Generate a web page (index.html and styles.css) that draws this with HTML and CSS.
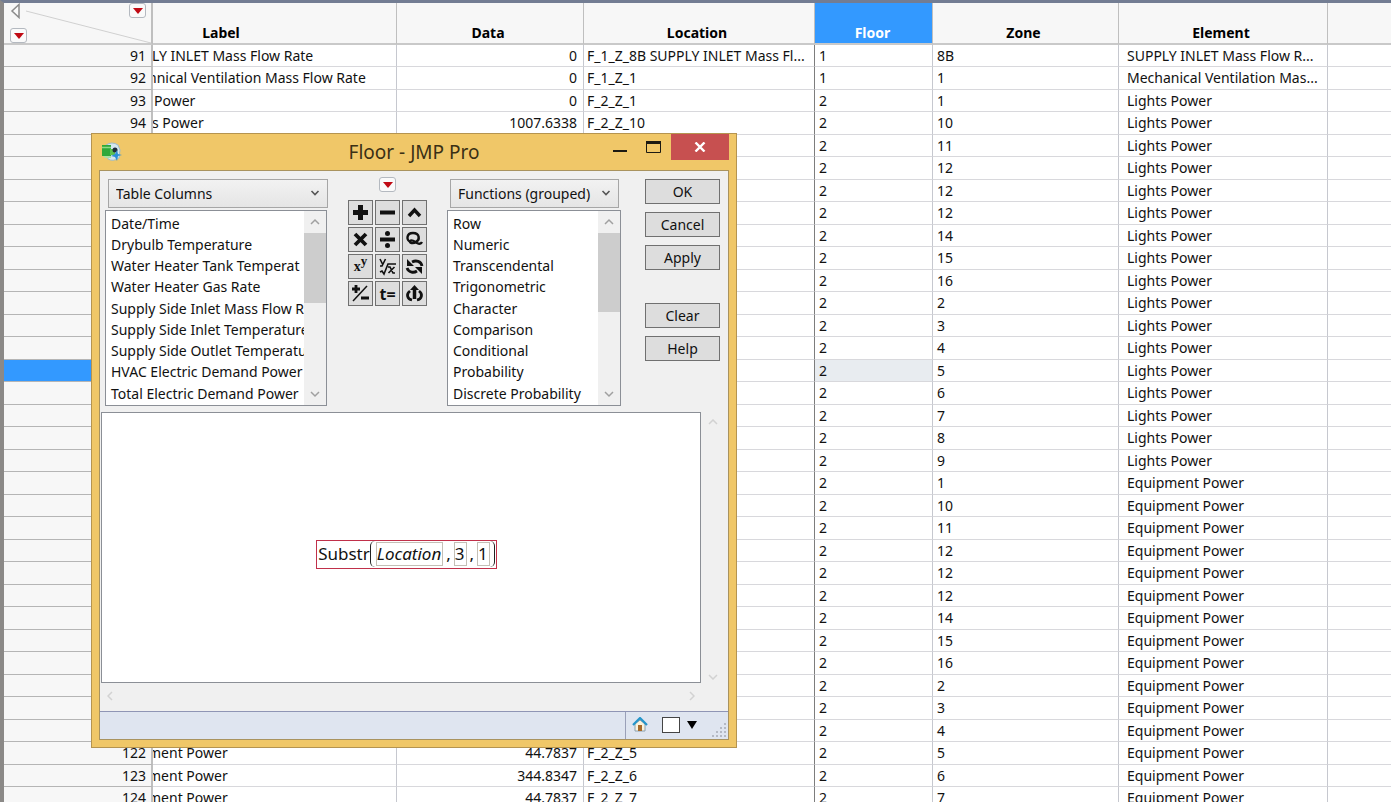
FILE: index.html
```html
<!DOCTYPE html>
<html lang="en">
<head>
<meta charset="utf-8">
<title>Floor - JMP Pro</title>
<link rel="stylesheet" href="styles.css">
</head>
<body>
<main class="sheet">
<table class="data">
<colgroup><col class="c-row"><col class="c-label"><col class="c-data"><col class="c-location"><col class="c-floor"><col class="c-zone"><col class="c-element"><col></colgroup>
<thead>
<tr>
<th class="corner">
<div class="corner-box">
<svg class="diagonal" viewBox="0 0 147 40" preserveAspectRatio="none" aria-hidden="true"><path d="M22 8L147 40" stroke="#d0d0d0" fill="none"/></svg>
<div class="corner-top">
<button class="plain" aria-label="Collapse panel"><svg width="12" height="16" viewBox="0 0 12 16"><path d="M9 1.500v13L2 8z" fill="#fafafa" stroke="#8c8c8c" stroke-width="1.500"/></svg></button>
<button class="red-menu" aria-label="Columns menu"><svg width="10" height="6" viewBox="0 0 10 6"><path d="M0 0h10L5 6z" fill="#c00a14"/></svg></button>
</div>
<button class="red-menu" aria-label="Rows menu"><svg width="10" height="6" viewBox="0 0 10 6"><path d="M0 0h10L5 6z" fill="#c00a14"/></svg></button>
</div>
</th>
<th class="h-label">Label</th><th>Data</th><th>Location</th><th class="picked">Floor</th><th>Zone</th><th>Element</th><th></th>
</tr>
</thead>
<tbody>
<tr><th>91</th><td class="cut">LY INLET Mass Flow Rate</td><td>0</td><td>F_1_Z_8B SUPPLY INLET Mass Fl...</td><td>1</td><td>8B</td><td>SUPPLY INLET Mass Flow R...</td><td></td></tr>
<tr><th>92</th><td class="cut deep">hnical Ventilation Mass Flow Rate</td><td>0</td><td>F_1_Z_1</td><td>1</td><td>1</td><td>Mechanical Ventilation Mas...</td><td></td></tr>
<tr><th>93</th><td>Power</td><td>0</td><td>F_2_Z_1</td><td>2</td><td>1</td><td>Lights Power</td><td></td></tr>
<tr><th>94</th><td class="cut">s Power</td><td>1007.6338</td><td>F_2_Z_10</td><td>2</td><td>10</td><td>Lights Power</td><td></td></tr>
<tr><th></th><td></td><td></td><td></td><td>2</td><td>11</td><td>Lights Power</td><td></td></tr>
<tr><th></th><td></td><td></td><td></td><td>2</td><td>12</td><td>Lights Power</td><td></td></tr>
<tr><th></th><td></td><td></td><td></td><td>2</td><td>12</td><td>Lights Power</td><td></td></tr>
<tr><th></th><td></td><td></td><td></td><td>2</td><td>12</td><td>Lights Power</td><td></td></tr>
<tr><th></th><td></td><td></td><td></td><td>2</td><td>14</td><td>Lights Power</td><td></td></tr>
<tr><th></th><td></td><td></td><td></td><td>2</td><td>15</td><td>Lights Power</td><td></td></tr>
<tr><th></th><td></td><td></td><td></td><td>2</td><td>16</td><td>Lights Power</td><td></td></tr>
<tr><th></th><td></td><td></td><td></td><td>2</td><td>2</td><td>Lights Power</td><td></td></tr>
<tr><th></th><td></td><td></td><td></td><td>2</td><td>3</td><td>Lights Power</td><td></td></tr>
<tr><th></th><td></td><td></td><td></td><td>2</td><td>4</td><td>Lights Power</td><td></td></tr>
<tr class="current"><th></th><td></td><td></td><td></td><td>2</td><td>5</td><td>Lights Power</td><td></td></tr>
<tr><th></th><td></td><td></td><td></td><td>2</td><td>6</td><td>Lights Power</td><td></td></tr>
<tr><th></th><td></td><td></td><td></td><td>2</td><td>7</td><td>Lights Power</td><td></td></tr>
<tr><th></th><td></td><td></td><td></td><td>2</td><td>8</td><td>Lights Power</td><td></td></tr>
<tr><th></th><td></td><td></td><td></td><td>2</td><td>9</td><td>Lights Power</td><td></td></tr>
<tr><th></th><td></td><td></td><td></td><td>2</td><td>1</td><td>Equipment Power</td><td></td></tr>
<tr><th></th><td></td><td></td><td></td><td>2</td><td>10</td><td>Equipment Power</td><td></td></tr>
<tr><th></th><td></td><td></td><td></td><td>2</td><td>11</td><td>Equipment Power</td><td></td></tr>
<tr><th></th><td></td><td></td><td></td><td>2</td><td>12</td><td>Equipment Power</td><td></td></tr>
<tr><th></th><td></td><td></td><td></td><td>2</td><td>12</td><td>Equipment Power</td><td></td></tr>
<tr><th></th><td></td><td></td><td></td><td>2</td><td>12</td><td>Equipment Power</td><td></td></tr>
<tr><th></th><td></td><td></td><td></td><td>2</td><td>14</td><td>Equipment Power</td><td></td></tr>
<tr><th></th><td></td><td></td><td></td><td>2</td><td>15</td><td>Equipment Power</td><td></td></tr>
<tr><th></th><td></td><td></td><td></td><td>2</td><td>16</td><td>Equipment Power</td><td></td></tr>
<tr><th></th><td></td><td></td><td></td><td>2</td><td>2</td><td>Equipment Power</td><td></td></tr>
<tr><th></th><td></td><td></td><td></td><td>2</td><td>3</td><td>Equipment Power</td><td></td></tr>
<tr><th></th><td></td><td></td><td></td><td>2</td><td>4</td><td>Equipment Power</td><td></td></tr>
<tr><th>122</th><td class="cut deep">ment Power</td><td>44.7837</td><td>F_2_Z_5</td><td>2</td><td>5</td><td>Equipment Power</td><td></td></tr>
<tr><th>123</th><td class="cut deep">ment Power</td><td>344.8347</td><td>F_2_Z_6</td><td>2</td><td>6</td><td>Equipment Power</td><td></td></tr>
<tr><th>124</th><td class="cut deep">ment Power</td><td>44.7837</td><td>F_2_Z_7</td><td>2</td><td>7</td><td>Equipment Power</td><td></td></tr>
</tbody>
</table>
</main>

<section class="window" role="dialog" aria-labelledby="window-title">
<header class="titlebar">
<svg class="app-icon" width="22" height="20" viewBox="0 0 22 20" aria-hidden="true">
<path d="M5 3q6-4 12 0l2 5-1 8q-6 4-11 1z" fill="#d5e6ee" stroke="#9dbccb"/>
<path d="M1 3h9v11H1z" fill="#2fa83a"/><path d="M1 5.500h9" stroke="#8edb86" stroke-width="1.500"/><path d="M2 14h8v2H4z" fill="#a8dfa0"/>
<path d="M9 7h5v6H9z" fill="#5cc050"/><circle cx="14" cy="8" r="2.500" fill="#1d2b38"/>
<path d="M16 8l1 4 4 1-4 1-1 5-2-4-4-1 4-2z" fill="#2b8fd6"/>
</svg>
<h1 id="window-title">Floor - JMP Pro</h1>
<div class="controls">
<button class="ctl" aria-label="Minimize"><svg width="16" height="14" viewBox="0 0 16 14"><path d="M1 11h14" stroke="#1c1a12" stroke-width="2"/></svg></button>
<button class="ctl" aria-label="Maximize"><svg width="16" height="14" viewBox="0 0 16 14"><path d="M.5 2v10.500h14V2z" fill="none" stroke="#1c1a12"/><path d="M0 2.500h15" stroke="#1c1a12" stroke-width="3"/></svg></button>
<button class="ctl close" aria-label="Close"><svg width="12" height="10" viewBox="0 0 12 10"><path d="M1.500.5l9 9M10.500.5l-9 9" stroke="#fff" stroke-width="2.400"/></svg></button>
</div>
</header>
<div class="client">
<div class="top">
<div class="picker">
<div class="combo"><select aria-label="Column source"><option>Table Columns</option></select><svg width="10" height="6" viewBox="0 0 10 6"><path d="M1.500 1l3.500 3.500L8.500 1" fill="none" stroke="#555" stroke-width="1.600"/></svg></div>
<div class="listbox">
<ul>
<li>Date/Time</li><li>Drybulb Temperature</li><li>Water Heater Tank Temperat</li><li>Water Heater Gas Rate</li><li>Supply Side Inlet Mass Flow R</li><li>Supply Side Inlet Temperature</li><li>Supply Side Outlet Temperatu</li><li>HVAC Electric Demand Power</li><li>Total Electric Demand Power</li>
</ul>
<div class="scroll"><svg viewBox="0 0 10 6"><path d="M1 5l4-4 4 4"/></svg><i class="thumb"></i><svg viewBox="0 0 10 6"><path d="M1 1l4 4 4-4"/></svg></div>
</div>
</div>
<div class="middle">
<button class="red-menu" aria-label="Formula menu"><svg width="10" height="6" viewBox="0 0 10 6"><path d="M0 0h10L5 6z" fill="#c00a14"/></svg></button>
<div class="keypad">
<button aria-label="Add"><svg viewBox="0 0 23 23"><path d="M11.500 4v15M4 11.500h15" stroke-width="5"/></svg></button>
<button aria-label="Subtract"><svg viewBox="0 0 23 23"><path d="M4 11.500h15" stroke-width="4"/></svg></button>
<button aria-label="Insert"><svg viewBox="0 0 23 23"><path d="M6 15l5.500-6 5.500 6" stroke-width="3.400"/></svg></button>
<button aria-label="Multiply"><svg viewBox="0 0 23 23"><path d="M6 6l11 11M17 6L6 17" stroke-width="3.800"/></svg></button>
<button aria-label="Divide"><svg viewBox="0 0 23 23"><path d="M4 11.500h15" stroke-width="4"/><circle cx="11.500" cy="5.500" r="2.500" class="solid"/><circle cx="11.500" cy="17.500" r="2.500" class="solid"/></svg></button>
<button aria-label="Delete"><svg viewBox="0 0 23 23"><path d="M8 14C3 13 3 5 10 5c7 0 7 7 3 9-3 2-7 1-6-1 2-2 5 1 7 2 2 1 4 1 5-1" stroke-width="2.400"/></svg></button>
<button class="math" aria-label="Power"><span>x<sup>y</sup></span></button>
<button aria-label="Root"><svg viewBox="0 0 23 23"><path d="M4 4l2.500 5M9.500 4L6 11H4M4 17l2-1 2 3L12 9h8M12 12h2l3 6h2M18.500 12l-6 6" stroke-width="1.600"/></svg></button>
<button aria-label="Switch terms"><svg viewBox="0 0 23 23"><path d="M19 11c-1-5-6-6-10-4M4 13c2 5 7 5 10 3" stroke-width="2.800"/><path d="M4 4v7h7zM19 19v-7h-7z" class="solid"/></svg></button>
<button aria-label="Change sign"><svg viewBox="0 0 23 23"><path d="M7 3v8M3 7h8M12 16h8" stroke-width="2.800"/><path d="M4 19L18 4" stroke-width="1.500"/></svg></button>
<button class="assign" aria-label="Local variable"><span>t=</span></button>
<button aria-label="Peel expression"><svg viewBox="0 0 23 23"><path d="M11.500 17V7" stroke-width="3.500"/><path d="M7 9c-4 3-3 8 2 9M16 9c4 3 3 8-2 9" stroke-width="2.800"/><path d="M7 8l4.500-5L16 8z" class="solid"/></svg></button>
</div>
</div>
<div class="picker">
<div class="combo functions"><select aria-label="Function order"><option>Functions (grouped)</option></select><svg width="10" height="6" viewBox="0 0 10 6"><path d="M1.500 1l3.500 3.500L8.500 1" fill="none" stroke="#555" stroke-width="1.600"/></svg></div>
<div class="listbox">
<ul>
<li>Row</li><li>Numeric</li><li>Transcendental</li><li>Trigonometric</li><li>Character</li><li>Comparison</li><li>Conditional</li><li>Probability</li><li>Discrete Probability</li>
</ul>
<div class="scroll"><svg viewBox="0 0 10 6"><path d="M1 5l4-4 4 4"/></svg><i class="thumb long"></i><svg viewBox="0 0 10 6"><path d="M1 1l4 4 4-4"/></svg></div>
</div>
</div>
<div class="actions">
<button>OK</button><button>Cancel</button><button>Apply</button><button class="apart">Clear</button><button>Help</button>
</div>
</div>
<div class="editor">
<div class="canvas">
<div class="formula"><span>Substr</span><span class="args"><span class="term name">Location</span><span class="comma">,</span><span class="term">3</span><span class="comma">,</span><span class="term">1</span></span></div>
</div>
<div class="faint vertical"><svg viewBox="0 0 10 6"><path d="M1 5l4-4 4 4"/></svg><svg viewBox="0 0 10 6"><path d="M1 1l4 4 4-4"/></svg></div>
<div class="faint horizontal"><svg viewBox="0 0 6 10"><path d="M5 1L1 5l4 4"/></svg><svg viewBox="0 0 6 10"><path d="M1 1l4 4-4 4"/></svg></div>
</div>
<footer class="status">
<div class="status-tools">
<button class="plain" aria-label="Home window"><svg width="16" height="15" viewBox="0 0 16 15"><path d="M3 7v7h10V7L8 3z" fill="#fbf3dc" stroke="#8aa0b0"/><path d="M6 8h4v6H6z" fill="#a86a28"/><path d="M1 8l7-7 7 7" fill="none" stroke="#2595c9" stroke-width="2.200"/></svg></button>
<input type="checkbox" aria-label="Select window">
<button class="plain" aria-label="Window list"><svg width="10" height="8" viewBox="0 0 10 8"><path d="M0 0h10L5 8z"/></svg></button>
<svg class="grip" width="14" height="14" viewBox="0 0 14 14" aria-hidden="true"><path d="M13 0v14M9 4v10M5 8v6M1 12v2" stroke="#b4b9c4" stroke-width="2" stroke-dasharray="2 2"/></svg>
</div>
</footer>
</div>
</section>
</body>
</html>
```
FILE: styles.css
```css
* { box-sizing: border-box; }

body {
  margin: 0;
  height: 100vh;
  overflow: hidden;
  background: #fff;
  color: #111;
  font: 14px/20px "Noto Sans", "Open Sans", sans-serif;
}

button, select { font: inherit; color: inherit; margin: 0; padding: 0; }
button svg { display: block; }

.sheet {
  height: 100vh;
  overflow: hidden;
  border-left: 4px solid #8b8987;
  border-top: 3px solid #737d93;
}

/* Data table */
.data {
  width: 100%;
  table-layout: fixed;
  border-collapse: separate;
  border-spacing: 0;
}
.c-row { width: 149px; }
.c-label { width: 244px; }
.c-data { width: 187px; }
.c-location { width: 231px; }
.c-floor { width: 118px; }
.c-zone { width: 186px; }
.c-element { width: 209px; }

.data th, .data td {
  padding: 0 6px 0 3px;
  overflow: hidden;
  white-space: nowrap;
  text-align: left;
}
.data thead th {
  height: 42px;
  padding: 0 4px 0 0;
  vertical-align: bottom;
  text-align: center;
  font-weight: bold;
  color: #000;
  background: #f7f7f7;
  border-right: 1px solid #bfbfbf;
  border-bottom: 2px solid #c9c9c9;
}
.data thead .h-label { padding-right: 107px; }
.data thead .picked {
  padding-right: 2px;
  background: #3399ff;
  color: #fff;
}
.data thead .corner { padding: 0; border-right: 2px solid #bfbfbf; }

.data tbody tr { height: 22px; }
.data tbody tr:nth-child(even) { height: 23px; }
.data tbody td {
  border-right: 1px solid #c6c8cf;
  border-bottom: 1px solid #d8d8dc;
}
.data tbody th {
  padding-right: 5px;
  font-weight: normal;
  text-align: right;
  background: #f7f7f7;
  border-right: 2px solid #bfbfbf;
  border-bottom: 1px solid #b5b5b5;
}
.data tbody td:nth-child(2) { padding-left: 1px; }
.data tbody .cut { text-indent: -2px; }
.data tbody .deep { text-indent: -6px; }
.data tbody td:nth-child(3) { text-align: right; }
.data tbody td:nth-child(4) { border-right-color: #7d7d7d; padding-right: 0; }
.data tbody td:nth-child(5), .data tbody td:nth-child(6) { padding-left: 4px; }
.data tbody td:nth-child(7) { padding: 0 0 0 8px; }
.data tbody td:last-child, .data thead th:last-child { border-right: 0; }
.data tbody .current th { background: #3399ff; }
.data tbody .current td:nth-child(5) { background: #e8ecf0; }

.corner-box {
  position: relative;
  display: flex;
  flex-direction: column;
  justify-content: space-between;
  height: 40px;
  padding: 0 5px 0 6px;
}
.corner-top { display: flex; justify-content: space-between; }
.diagonal { position: absolute; inset: 0; width: 100%; height: 100%; }
.plain { border: 0; background: none; position: relative; }
.red-menu {
  position: relative;
  display: grid;
  place-items: center;
  width: 17px;
  height: 15px;
  border: 1px solid #b4b9c0;
  border-radius: 3px;
  background: #fafafa;
}

/* Formula window */
.window {
  position: absolute;
  left: 91px;
  top: 133px;
  width: 646px;
  border: 1px solid #b59450;
  background: #f0c768;
  padding: 0 7px 7px;
}
.titlebar { display: flex; height: 36px; }
.app-icon { margin: 8px 0 0 2px; }
.titlebar h1 {
  flex: 1;
  margin: 0;
  padding: 0 0 0 102px;
  text-align: center;
  font-size: 19px;
  font-weight: normal;
  line-height: 36px;
  color: #3a3015;
}
.controls { display: flex; align-items: flex-start; }
.ctl {
  display: grid;
  place-items: center;
  width: 34px;
  height: 26px;
  border: 0;
  background: none;
}
.ctl.close { width: 58px; background: #c75050; }

.client { border: 1px solid #a9935f; background: #f0f0f0; }
.top {
  display: grid;
  grid-template-columns: 223px 79px 174px 79px;
  gap: 20px;
  padding: 8px 5px 6px;
}
.combo { position: relative; margin: 0 0 2px 3px; }
.combo.functions { margin-right: 2px; }
.combo select {
  display: block;
  width: 100%;
  height: 29px;
  padding: 0 7px;
  appearance: none;
  border: 1px solid #a6a6a6;
  border-radius: 0;
  background: linear-gradient(#f2f2f2, #e5e5e5);
}
.combo svg { position: absolute; right: 8px; top: 11px; pointer-events: none; }

.listbox {
  display: flex;
  height: 196px;
  margin-right: 1px;
  border: 1px solid #8b8f96;
  background: #fff;
}
.picker:nth-child(3) .listbox { margin-right: 0; }
.listbox ul {
  flex: 1;
  min-width: 0;
  overflow: hidden;
  margin: 0;
  padding: 2px 0 0 5px;
  list-style: none;
  white-space: nowrap;
}
.listbox li { height: 21px; line-height: 21px; }
.listbox li:nth-child(4n) { height: 22px; }
.scroll {
  display: flex;
  flex-direction: column;
  width: 22px;
  background: #f0f0f0;
}
.scroll svg { width: 10px; height: 22px; margin: 0 auto; }
.scroll path { fill: none; stroke: #a0a0a0; stroke-width: 1.5; }
.scroll svg:last-child { margin-top: auto; }
.thumb { height: 70px; background: #cdcdcd; }
.thumb.long { height: 79px; }

.middle { display: flex; flex-direction: column; align-items: center; gap: 8px; }
.middle .red-menu { margin-top: -2px; }
.keypad { display: grid; grid-template-columns: repeat(3, 25px); gap: 2px; }
.keypad button {
  height: 25px;
  border: 1px solid #707070;
  background: #ddd;
  overflow: hidden;
}
.keypad svg { width: 23px; height: 23px; }
.keypad path { fill: none; stroke: #111; }
.keypad .solid { fill: #111; stroke: none; }
.keypad .math { font: bold 14px/20px "Liberation Serif", serif; }
.math sup { font-size: 13px; line-height: 0; }
.keypad .assign { font-size: 16px; font-weight: bold; line-height: 20px; }

.actions { display: flex; flex-direction: column; gap: 8px; padding-left: 4px; }
.actions button { height: 25px; border: 1px solid #707070; background: #ddd; }
.actions .apart { margin-top: 25px; }

.editor {
  display: grid;
  grid-template-columns: 1fr 27px;
  grid-template-rows: 271px 28px;
  padding-left: 1px;
}
.canvas {
  display: grid;
  place-items: center;
  padding: 13px 0 0 11px;
  border: 1px solid #8b8f96;
  background: #fff;
}
.formula {
  display: flex;
  align-items: center;
  height: 29px;
  padding: 0 1px;
  border: 1px solid #c0304a;
  font-size: 17px;
}
.args {
  display: flex;
  align-items: center;
  gap: 3px;
  height: 26px;
  padding: 0 4px 0 5px;
  border-left: 1px solid #222;
  border-right: 1px solid #222;
  border-radius: 5px;
}
.term { height: 24px; padding: 0 1px 0 0; line-height: 22px; border: 1px solid #c4bfb6; }
.name { font-style: italic; }
.faint { display: flex; justify-content: space-between; align-items: center; }
.faint path { fill: none; stroke: #d2d2d2; stroke-width: 1.5; }
.vertical { flex-direction: column; padding: 7px 3px 3px 0; }
.vertical svg { width: 10px; height: 6px; }
.horizontal { padding: 0 6px 2px; }
.horizontal svg { width: 6px; height: 10px; }

.status {
  display: flex;
  justify-content: flex-end;
  height: 28px;
  border-top: 1px solid #8f95b5;
  background: #dfe5f0;
}
.status-tools {
  display: flex;
  align-items: center;
  width: 103px;
  padding: 0 2px 2px 6px;
  border-left: 1px solid #9aa0b8;
}
.status-tools input {
  appearance: none;
  width: 18px;
  height: 16px;
  margin: 0 7px 0 14px;
  border: 1px solid #444;
  background: #fff;
}
.grip { margin: 10px 0 0 auto; }
```
